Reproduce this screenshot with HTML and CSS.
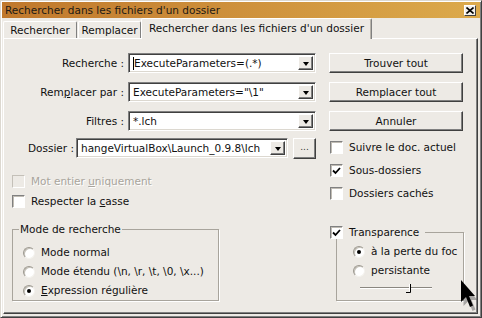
FILE: index.html
```html
<!DOCTYPE html>
<html lang="fr">
<head>
<meta charset="utf-8">
<title>Rechercher dans les fichiers d'un dossier</title>
<link rel="stylesheet" href="styles.css">
</head>
<body>
<div class="window">
  <div class="titlebar">
    <span class="title">Rechercher dans les fichiers d'un dossier</span>
    <span class="close"><svg width="8" height="7" viewBox="0 0 8 7"><path d="M0.5 0.5L7.5 6.5M7.5 0.5L0.5 6.5" stroke="#000" stroke-width="1.6"/></svg></span>
  </div>
  <div class="tabs">
    <div class="tab t1">Rechercher</div>
    <div class="tab t2">Remplacer</div>
    <div class="tab active">Rechercher dans les fichiers d'un dossier</div>
  </div>
  <div class="panel">
    <div class="left">
      <div class="row">
        <span class="lbl">Recherche :</span>
        <div class="combo"><span class="val"><span class="caret"></span>ExecuteParameters=(.*)</span><span class="drop"><i class="tri"></i></span></div>
      </div>
      <div class="row">
        <span class="lbl">Rem<u>p</u>lacer par :</span>
        <div class="combo"><span class="val">ExecuteParameters="\1"</span><span class="drop"><i class="tri"></i></span></div>
      </div>
      <div class="row row3">
        <span class="lbl">Filtres :</span>
        <div class="combo"><span class="val">*.lch</span><span class="drop"><i class="tri"></i></span></div>
      </div>
      <div class="row dossier">
        <span class="lbl2">Dossier :</span>
        <div class="combo wide"><span class="val">hangeVirtualBox\Launch_0.9.8\lch</span><span class="drop"><i class="tri"></i></span></div>
        <span class="btn small">...</span>
      </div>
      <div class="check disabled first"><span class="cb"></span><span>Mot entier <u>u</u>niquement</span></div>
      <div class="check second"><span class="cb"></span><span>Respecter la <u>c</u>asse</span></div>
      <fieldset class="group mode">
        <legend>Mode de recherche</legend>
        <div class="radio"><span class="rb"></span><span>Mode normal</span></div>
        <div class="radio"><span class="rb"></span><span>Mode étendu (\n, \r, \t, \0, \x...)</span></div>
        <div class="radio"><span class="rb on"></span><span><u>E</u>xpression régulière</span></div>
      </fieldset>
    </div>
    <div class="right">
      <span class="btn">Trouver tout</span>
      <span class="btn">Remplacer tout</span>
      <span class="btn">Annuler</span>
      <div class="check r1"><span class="cb"></span><span>Suivre le doc. actuel</span></div>
      <div class="check r2"><span class="cb checked"><svg width="9" height="8" viewBox="0 0 9 8"><path d="M1 3.5L3.5 6L8 1" fill="none" stroke="#000" stroke-width="1.8"/></svg></span><span>Sous-dossiers</span></div>
      <div class="check r2"><span class="cb"></span><span>Dossiers cachés</span></div>
      <fieldset class="group trans">
        <legend><span class="cb checked"><svg width="9" height="8" viewBox="0 0 9 8"><path d="M1 3.5L3.5 6L8 1" fill="none" stroke="#000" stroke-width="1.8"/></svg></span><span>Transparence</span></legend>
        <div class="radio"><span class="rb on"></span><span class="clip">à la perte du foc</span></div>
        <div class="radio"><span class="rb"></span><span>persistante</span></div>
        <div class="slider"><svg width="72" height="11" viewBox="0 0 72 11"><path d="M0 4.5H72" stroke="#8a8780" stroke-width="1"/><path d="M0 5.5H72" stroke="#ffffff" stroke-width="1"/><path d="M50.5 1V9.5H46" fill="none" stroke="#000" stroke-width="1"/><path d="M49.5 1V8.5" stroke="#fff" stroke-width="1"/></svg></div>
      </fieldset>
    </div>
  </div>
</div>
<svg class="cursor" width="20" height="36" viewBox="0 0 20 36"><path d="M4 4L4 26L9 21L13 31L16 29.5L12 20L18 20Z" fill="#555" opacity="0.45" transform="translate(1.5,2)"/><path d="M3 2L3 24L8 19L12 29L15 27.5L11 18L17 18Z" fill="#000"/></svg>
</body>
</html>
```
FILE: styles.css
```css
* { box-sizing: border-box; }
html, body { margin: 0; padding: 0; }
body {
  width: 482px;
  height: 318px;
  overflow: hidden;
  position: relative;
  font-family: "DejaVu Sans", "Liberation Sans", sans-serif;
  font-size: 10.5px;
  line-height: 13px;
  color: #111;
  background: #edeae5;
}
u { text-decoration: underline; text-underline-offset: 1px; }
.window {
  width: 482px;
  height: 318px;
  border: 1px solid;
  border-color: #dcd8d0 #404040 #404040 #dcd8d0;
  box-shadow: inset 1px 1px #ffffff, inset -1px -1px #808080;
  padding: 1px;
  display: flex;
  flex-direction: column;
  background: #edeae5;
}
.titlebar {
  height: 16px;
  flex: none;
  background: linear-gradient(to right, #c0782c, #dcaa4c);
  display: flex;
  align-items: center;
  justify-content: space-between;
  padding: 0 3px 0 3px;
}
.title { color: #1c1a16; }
.close {
  width: 12px;
  height: 11px;
  background: #f2f0ec;
  border: 1px solid;
  border-color: #ffffff #404040 #404040 #ffffff;
  display: flex;
  align-items: center;
  justify-content: center;
  margin-right: 1px;
}
.tabs {
  height: 20px;
  flex: none;
  display: flex;
  align-items: flex-end;
  padding-left: 1px;
  position: relative;
  z-index: 2;
}
.tab {
  height: 17px;
  border: 1px solid;
  border-bottom: none;
  border-color: #ffffff #808080 transparent #ffffff;
  border-radius: 2px 2px 0 0;
  display: flex;
  align-items: center;
  justify-content: center;
  white-space: nowrap;
}
.t1 { width: 74px; }
.t2 { width: 63px; margin-left: 1px; }
.tab.active {
  width: 231px;
  height: 21px;
  margin-bottom: -1px;
  padding-bottom: 2px;
  background: #edeae5;
  box-shadow: inset -1px 0 #b8b4ac;
}
.panel {
  flex: 1;
  margin: 0 2px 2px 1px;
  border: 1px solid;
  border-color: #ffffff #404040 #404040 #ffffff;
  box-shadow: inset -1px -1px #808080;
  display: flex;
  padding-top: 14px;
}
.left { width: 312px; flex: none; display: flex; flex-direction: column; }
.right { width: 135px; margin-left: 13px; flex: none; display: flex; flex-direction: column; }
.row {
  height: 20px;
  display: flex;
  align-items: center;
  margin-bottom: 9px;
}
.row3 { margin-bottom: 7px; }
.lbl { width: 120px; text-align: right; margin-right: 4px; white-space: nowrap; }
.dossier { justify-content: flex-end; }
.lbl2 { margin-right: 2px; white-space: nowrap; }
.combo {
  width: 188px;
  height: 20px;
  border: 1px solid;
  border-color: #808080 #ffffff #ffffff #808080;
  box-shadow: inset 1px 1px #404040, inset -1px -1px #dcd8d0;
  background: #fff;
  display: flex;
  align-items: center;
  padding: 2px 2px 2px 4px;
}
.combo.wide { width: 212px; margin-right: 5px; }
.val { flex: 1; white-space: nowrap; overflow: hidden; display: flex; align-items: center; }
.caret { width: 1px; height: 13px; background: #000; margin-right: 0; }
.drop {
  width: 15px;
  height: 14px;
  flex: none;
  background: #edeae5;
  border: 1px solid;
  border-color: #ffffff #404040 #404040 #ffffff;
  box-shadow: inset -1px -1px #808080;
  display: flex;
  align-items: center;
  justify-content: center;
}
.tri {
  width: 0; height: 0;
  border-left: 3.5px solid transparent;
  border-right: 3.5px solid transparent;
  border-top: 4px solid #000;
  margin-top: 1px;
}
.btn {
  height: 20px;
  width: 134px;
  flex: none;
  border: 1px solid;
  border-color: #ffffff #404040 #404040 #ffffff;
  box-shadow: inset -1px -1px #808080;
  background: #edeae5;
  display: flex;
  align-items: center;
  justify-content: center;
  margin-bottom: 9px;
}
.btn.small { width: 23px; height: 21px; margin-bottom: 0; font-size: 9px; padding-bottom: 2px; color: #333; }
.check { display: flex; align-items: center; height: 13px; white-space: nowrap; }
.cb {
  width: 13px;
  height: 13px;
  flex: none;
  background: #fff;
  border: 1px solid;
  border-color: #808080 #ffffff #ffffff #808080;
  box-shadow: inset 1px 1px #c0bcb4;
  display: flex;
  align-items: center;
  justify-content: center;
  margin-right: 6px;
}
.check.first { margin-top: 8px; margin-left: 8px; }
.check.second { margin-top: 7px; margin-left: 8px; }
.check.disabled { color: #a8a49c; text-shadow: 1px 1px #ffffff; }
.check.disabled .cb { background: #edeae5; border-color: #c4c0b8 #ffffff #ffffff #c4c0b8; box-shadow: none; }
.check.r1 { margin-top: 1px; margin-left: 1px; }
.check.r2 { margin-top: 10px; margin-left: 1px; }
.group {
  margin: 0;
  border: 1px solid #a8a49c;
  box-shadow: 1px 1px 0 #ffffff;
  padding: 0;
}
.group legend { padding: 0 1px; line-height: 13px; }
.mode {
  width: 207px;
  height: 78px;
  margin: 15px 0 0 8px;
  padding: 10px 0 0 10px;
}
.mode legend { margin-left: -4px; }
.radio { display: flex; align-items: center; height: 13px; margin-bottom: 6px; white-space: nowrap; }
.rb {
  width: 12px;
  height: 12px;
  flex: none;
  border-radius: 50%;
  background: #fff;
  border: 1px solid;
  border-color: #9c988f #f4f2ee #f4f2ee #9c988f;
  box-shadow: inset 1px 1px #c4c0b8;
  margin-right: 6px;
  display: flex;
  align-items: center;
  justify-content: center;
}
.rb.on::after {
  content: "";
  width: 4px;
  height: 4px;
  border-radius: 50%;
  background: #000;
}
.trans {
  width: 128px;
  height: 75px;
  margin: 26px 0 0 7px;
  padding: 6px 0 0 16px;
}
.trans legend { margin-left: -23px; padding: 0 6px 0 0; display: flex; align-items: center; background: #edeae5; }
.trans legend .cb { margin-right: 6px; }
.clip { white-space: nowrap; }
.slider { height: 11px; margin-left: 7px; margin-top: 2px; }
.slider svg { display: block; }
.cursor { position: absolute; left: 458px; top: 278px; }
```
